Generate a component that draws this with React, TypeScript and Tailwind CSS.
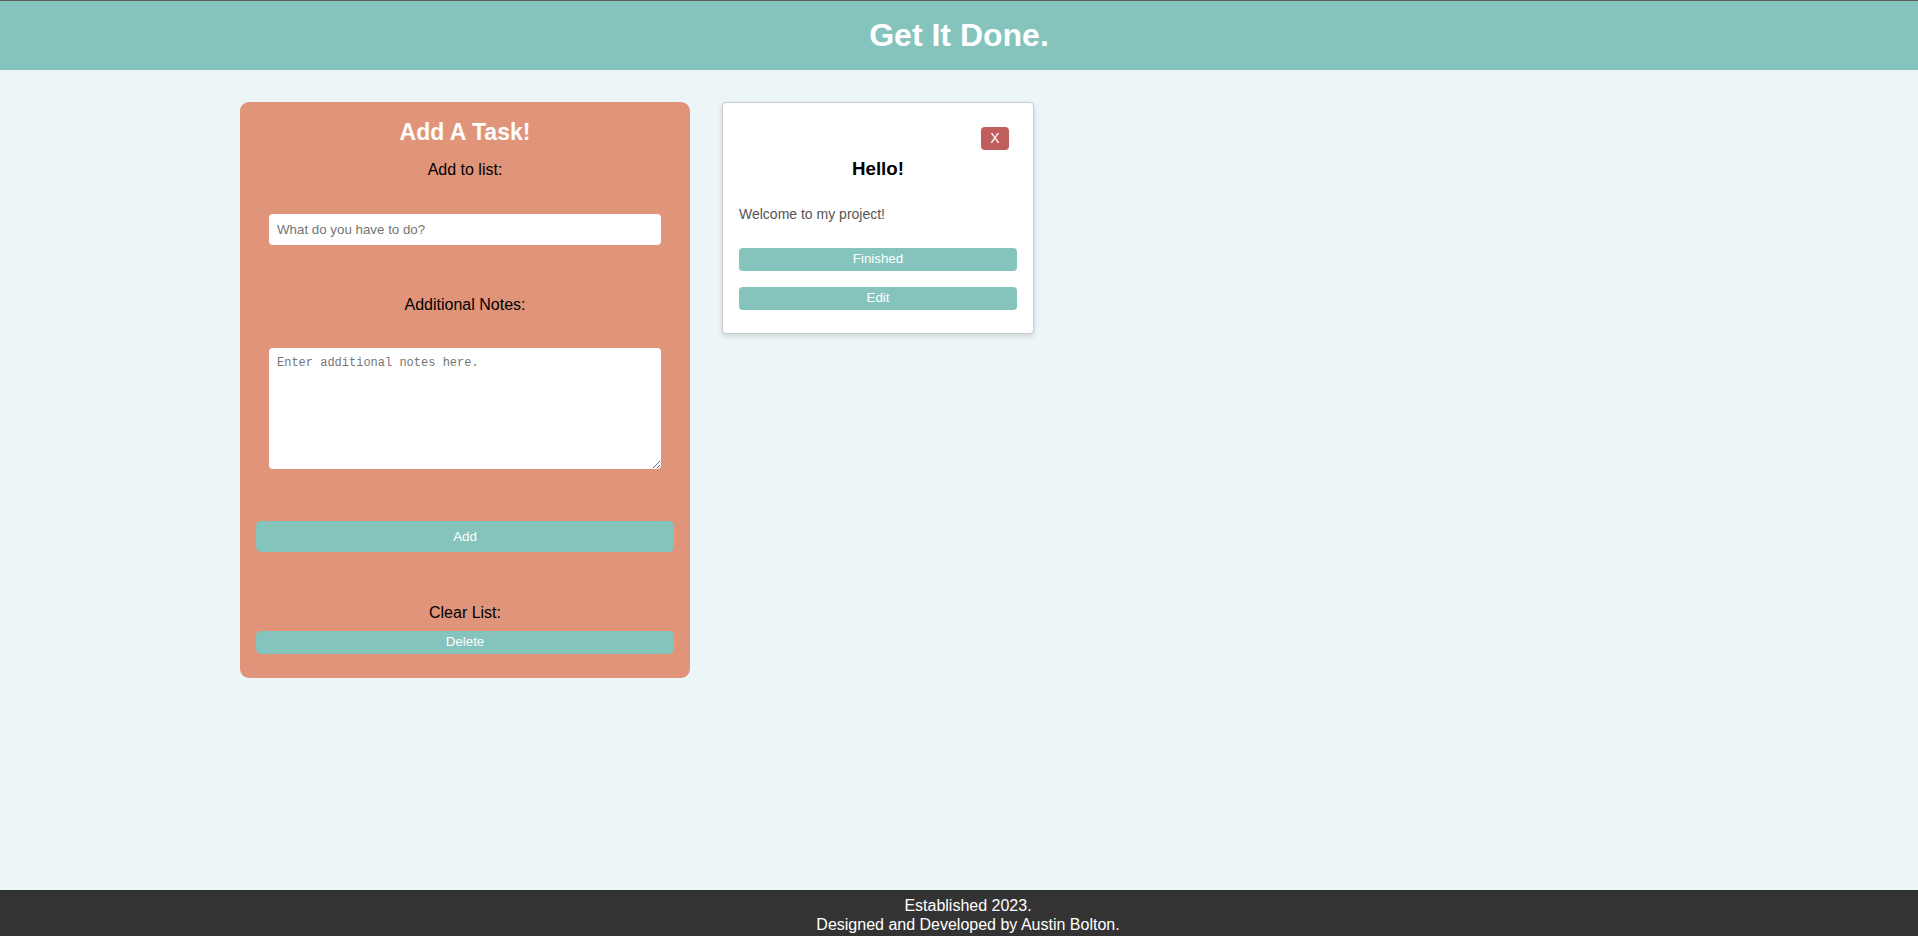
import React from "react";

// Simple to-do page: add-task form on the left, task cards on the right
const App: React.FC = () => {
  return (
    <div className="min-h-screen flex flex-col bg-[#ecf5f8] font-['Liberation_Sans',Arial,sans-serif]">
      {/* Header bar */}
      <header className="border-t border-[#5c5c5c] bg-[#84c4bd] h-[70px] flex items-center justify-center">
        <h1 className="text-[32px] font-bold text-white leading-[36.8px]">Get It Done.</h1>
      </header>

      {/* Main area */}
      <main className="flex-1 flex items-start gap-[32px] pl-[240px] pt-[32px]">
        {/* Add task form */}
        <section className="w-[450px] bg-[#e0947a] rounded-[9px] px-[16px] pt-[17px] pb-[24px] flex flex-col items-center">
          <h2 className="text-[23px] font-bold text-white leading-[26.5px]">Add A Task!</h2>
          <label className="mt-[15px] text-[16px] text-black leading-[18.4px]">Add to list:</label>
          <input
            type="text"
            placeholder="What do you have to do?"
            className="mt-[35px] w-[392px] h-[31px] bg-white rounded-[4px] px-[8px] text-[13.33px] outline-none placeholder:text-[#757575]"
          />
          <label className="mt-[51px] text-[16px] text-black leading-[18.4px]">Additional Notes:</label>
          <textarea
            placeholder="Enter additional notes here."
            className="mt-[34px] w-[392px] h-[121px] bg-white rounded-[4px] px-[8px] py-[8px] text-[12px] leading-[14px] font-['Liberation_Mono',monospace] outline-none placeholder:text-[#757575]"
          />
          <button className="mt-[52px] w-full h-[31px] bg-[#84c4bd] rounded-[5px] text-white text-[13.33px]">
            Add
          </button>
          <label className="mt-[52px] text-[16px] text-black leading-[18.4px]">Clear List:</label>
          <button className="mt-[8px] w-full h-[23px] bg-[#84c4bd] rounded-[5px] text-white text-[13.33px]">
            Delete
          </button>
        </section>

        {/* Task card */}
        <article className="w-[312px] bg-white border border-[#c9cdd0] rounded-[4px] shadow-[0_2px_5px_rgba(0,0,0,0.15)] px-[16px] pt-[24px] pb-[23px] flex flex-col">
          <div className="flex justify-end pr-[8px]">
            <button className="w-[28px] h-[23px] bg-[#c05d5d] rounded-[4px] text-white text-[14px]">X</button>
          </div>
          <h3 className="mt-[8px] text-center text-[18.72px] font-bold text-black leading-[21.5px]">Hello!</h3>
          <p className="mt-[26px] text-[14px] text-[#555] leading-[16px]">Welcome to my project!</p>
          <button className="mt-[26px] w-full h-[23px] bg-[#84c4bd] rounded-[4px] text-white text-[13.33px]">
            Finished
          </button>
          <button className="mt-[16px] w-full h-[23px] bg-[#84c4bd] rounded-[4px] text-white text-[13.33px]">
            Edit
          </button>
        </article>
      </main>

      {/* Footer */}
      <footer className="bg-[#333333] text-white text-center text-[16px] leading-[18.4px] pt-[7px] pb-[2px] pl-[18px]">
        <p>Established 2023.</p>
        <p>Designed and Developed by Austin Bolton.</p>
      </footer>
    </div>
  );
};

export default App;
